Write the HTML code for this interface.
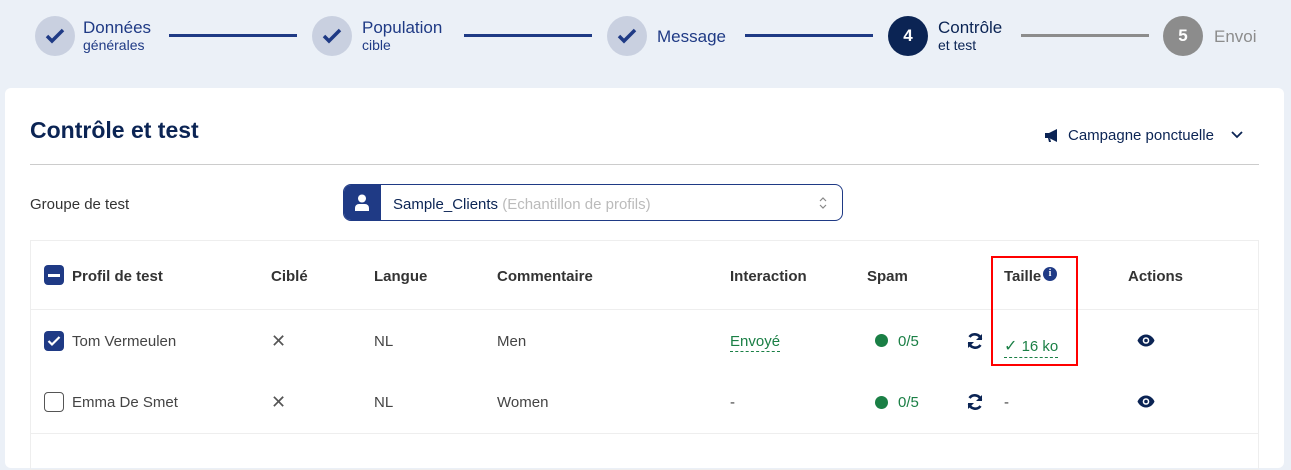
<!DOCTYPE html>
<html><head><meta charset="utf-8"><style>
*{margin:0;padding:0;box-sizing:border-box}
body{width:1291px;height:455px;background:#ebf0f7;font-family:"Liberation Sans",sans-serif;position:relative;overflow:hidden;color:#222}
.a{position:absolute;white-space:nowrap}
.c{position:absolute;width:40px;height:40px;border-radius:50%;top:16px;display:flex;align-items:center;justify-content:center}
.cd{background:#c9d0e0}
.ln{position:absolute;top:34px;height:3px;background:#1f3a85}
.st{color:#1f3a85;font-size:17px}
.sb{font-size:14px;color:#1f3a85}
.card{position:absolute;left:5px;top:88px;width:1279px;height:380px;background:#fff;border-radius:6px}
.th{font-weight:bold;font-size:15px;color:#333;top:268px}
.td{font-size:15px;color:#444}
</style></head><body>
<div class="c cd" style="left:35px"><svg width="20" height="16" viewBox="0 0 20 16"><path d="M2 8l5 5L18 2" stroke="#1f3a85" stroke-width="3.5" fill="none"/></svg></div>
<div class="a st" style="left:83px;top:18px">Données</div><div class="a sb" style="left:83px;top:37px">générales</div>
<div class="ln" style="left:169px;width:128px"></div>
<div class="c cd" style="left:312px"><svg width="20" height="16" viewBox="0 0 20 16"><path d="M2 8l5 5L18 2" stroke="#1f3a85" stroke-width="3.5" fill="none"/></svg></div>
<div class="a st" style="left:362px;top:18px">Population</div><div class="a sb" style="left:362px;top:37px">cible</div>
<div class="ln" style="left:464px;width:128px"></div>
<div class="c cd" style="left:607px"><svg width="20" height="16" viewBox="0 0 20 16"><path d="M2 8l5 5L18 2" stroke="#1f3a85" stroke-width="3.5" fill="none"/></svg></div>
<div class="a st" style="left:657px;top:27px">Message</div>
<div class="ln" style="left:745px;width:128px"></div>
<div class="c" style="left:888px;background:#0b2454;color:#fff;font-weight:bold;font-size:17px">4</div>
<div class="a" style="left:938px;top:18px;font-size:17px;color:#0b2454">Contrôle</div><div class="a" style="left:938px;top:37px;font-size:14px;color:#0b2454">et test</div>
<div class="ln" style="left:1021px;width:128px;background:#8c8c8c"></div>
<div class="c" style="left:1163px;background:#8c8c8c;color:#fff;font-weight:bold;font-size:17px">5</div>
<div class="a" style="left:1214px;top:27px;font-size:17px;color:#8c8c8c">Envoi</div>

<div class="card"></div>
<div class="a" style="left:30px;top:117px;font-size:23px;font-weight:bold;color:#0b2454">Contrôle et test</div>
<svg class="a" style="left:1044px;top:128px" width="16" height="15" viewBox="0 0 16 15"><path d="M1 5h4l8-4v13l-8-4H1z M4 10l1 4h2l-1-4z" fill="#0b2454"/></svg>
<div class="a" style="left:1068px;top:127px;font-size:15px;color:#0b2454">Campagne ponctuelle</div>
<svg class="a" style="left:1231px;top:131px" width="12" height="8" viewBox="0 0 12 8"><path d="M1 1l5 5 5-5" stroke="#0b2454" stroke-width="1.8" fill="none"/></svg>
<div class="a" style="left:30px;top:164px;width:1229px;height:1px;background:#ccc"></div>
<div class="a" style="left:30px;top:196px;font-size:15px;color:#333">Groupe de test</div>
<div class="a" style="left:343px;top:184px;width:500px;height:37px;border:1.5px solid #1f3a85;border-radius:8px;overflow:hidden">
<div class="a" style="left:0;top:0;width:37px;height:37px;background:#1f3a85"></div>
<svg class="a" style="left:10px;top:9px" width="16" height="17" viewBox="0 0 16 17"><circle cx="8" cy="4.5" r="4" fill="#fff"/><path d="M1 17v-3a4 4 0 0 1 4-4h6a4 4 0 0 1 4 4v3z" fill="#fff"/></svg>
<div class="a" style="left:49px;top:11px;font-size:15px;color:#0b2454">Sample_Clients <span style="color:#bbb">(Echantillon de profils)</span></div>
<svg class="a" style="left:474px;top:10px" width="10" height="16" viewBox="0 0 10 16"><path d="M2 6l3-3 3 3M2 10l3 3 3-3" stroke="#888" stroke-width="1.2" fill="none"/></svg>
</div>

<div class="a" style="left:30px;top:240px;width:1229px;height:230px;border:1px solid #eee"></div>
<div class="a" style="left:30px;top:309px;width:1229px;height:1px;background:#eee"></div>
<div class="a" style="left:30px;top:433px;width:1229px;height:1px;background:#eee"></div>

<div class="a" style="left:44px;top:265px;width:20px;height:20px;background:#1f3a85;border-radius:4px"><div class="a" style="left:4px;top:9px;width:12px;height:2.5px;background:#fff"></div></div>
<div class="a th" style="left:72px">Profil de test</div>
<div class="a th" style="left:271px">Ciblé</div>
<div class="a th" style="left:374px">Langue</div>
<div class="a th" style="left:497px">Commentaire</div>
<div class="a th" style="left:730px">Interaction</div>
<div class="a th" style="left:867px">Spam</div>
<div class="a th" style="left:1004px">Taille</div>
<div class="a" style="left:1043px;top:267px;width:14px;height:14px;border-radius:50%;background:#1f3a85;color:#fff;font-size:10px;font-weight:bold;text-align:center;line-height:14px;font-family:'Liberation Serif',serif">i</div>
<div class="a th" style="left:1128px">Actions</div>

<div class="a" style="left:44px;top:331px;width:20px;height:20px;background:#1f3a85;border-radius:4px"><svg class="a" style="left:3px;top:4px" width="14" height="12" viewBox="0 0 14 12"><path d="M1.5 6l3.5 3.5L12.5 2" stroke="#fff" stroke-width="2.2" fill="none"/></svg></div>
<div class="a td" style="left:72px;top:333px">Tom Vermeulen</div>
<div class="a td" style="left:271px;top:331px;font-size:18px;color:#555">✕</div>
<div class="a td" style="left:374px;top:333px">NL</div>
<div class="a td" style="left:497px;top:333px">Men</div>
<div class="a td" style="left:730px;top:333px;color:#1a7f45;border-bottom:1px dashed #1a7f45;padding-bottom:1px">Envoyé</div>
<div class="a" style="left:875px;top:334px;width:13px;height:13px;border-radius:50%;background:#1a7f45"></div>
<div class="a td" style="left:898px;top:333px;color:#1a7f45">0/5</div>
<div class="a td" style="left:1004px;top:336px;color:#1a7f45;border-bottom:1px dashed #1a7f45;padding-bottom:1px"><span style="font-size:16px">✓</span> 16 ko</div>

<div class="a" style="left:44px;top:392px;width:20px;height:20px;border:1.3px solid #555;border-radius:4px"></div>
<div class="a td" style="left:72px;top:394px">Emma De Smet</div>
<div class="a td" style="left:271px;top:392px;font-size:18px;color:#555">✕</div>
<div class="a td" style="left:374px;top:394px">NL</div>
<div class="a td" style="left:497px;top:394px">Women</div>
<div class="a td" style="left:730px;top:394px">-</div>
<div class="a" style="left:875px;top:396px;width:13px;height:13px;border-radius:50%;background:#1a7f45"></div>
<div class="a td" style="left:898px;top:394px;color:#1a7f45">0/5</div>
<div class="a td" style="left:1004px;top:394px">-</div>

<svg class="a" style="left:966px;top:332px" width="18" height="18" viewBox="0 0 18 18"><path d="M15 7A6.5 6.5 0 0 0 3.5 5M3 11a6.5 6.5 0 0 0 11.5 2" stroke="#0b2454" stroke-width="2.6" fill="none"/><path d="M16 2v6h-6zM2 16v-6h6z" fill="#0b2454"/></svg>
<svg class="a" style="left:966px;top:393px" width="18" height="18" viewBox="0 0 18 18"><path d="M15 7A6.5 6.5 0 0 0 3.5 5M3 11a6.5 6.5 0 0 0 11.5 2" stroke="#0b2454" stroke-width="2.6" fill="none"/><path d="M16 2v6h-6zM2 16v-6h6z" fill="#0b2454"/></svg>
<svg class="a" style="left:1137px;top:334px" width="18" height="13" viewBox="0 0 18 13"><path d="M9 0.5C4.5 0.5 1.5 4 0.5 6.5 1.5 9 4.5 12.5 9 12.5s7.5-3.5 8.5-6C16.5 4 13.5 0.5 9 0.5z" fill="#0b2454"/><circle cx="9" cy="6.5" r="3.3" fill="#fff"/><circle cx="9" cy="6.5" r="1.8" fill="#0b2454"/></svg>
<svg class="a" style="left:1137px;top:395px" width="18" height="13" viewBox="0 0 18 13"><path d="M9 0.5C4.5 0.5 1.5 4 0.5 6.5 1.5 9 4.5 12.5 9 12.5s7.5-3.5 8.5-6C16.5 4 13.5 0.5 9 0.5z" fill="#0b2454"/><circle cx="9" cy="6.5" r="3.3" fill="#fff"/><circle cx="9" cy="6.5" r="1.8" fill="#0b2454"/></svg>

<div class="a" style="left:991px;top:256px;width:87px;height:110px;border:2.5px solid #f00"></div>
</body></html>
